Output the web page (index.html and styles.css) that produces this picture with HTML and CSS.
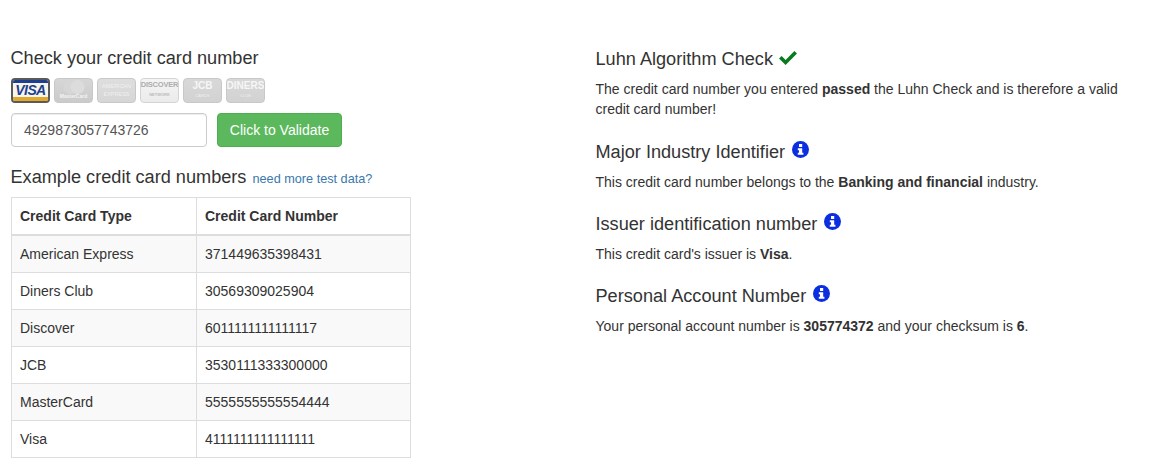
FILE: index.html
```html
<!DOCTYPE html>
<html>
<head>
  <link rel="stylesheet" href="styles.css">
</head>
<body>
  <div class="page">
    <!-- Left: form and examples -->
    <div class="left">
      <h4 class="title-check">Check your credit card number</h4>
      <div class="cards">
        <div class="card visa"><span class="visa-top"></span><span class="visa-text">VISA</span><span class="visa-bottom"></span></div>
        <div class="card off mc">
          <svg width="22" height="14" viewBox="0 0 22 14"><circle cx="7.500" cy="7" r="7" fill="#d6d6d6"/><circle cx="14.500" cy="7" r="7" fill="#dcdcdc"/></svg>
          <span class="mc-text">MasterCard</span>
        </div>
        <div class="card off amex"><span>AMERICAN</span><span>EXPRESS</span></div>
        <div class="card off discover"><span class="disc-name">DISCOVER</span><span class="disc-sub">NETWORK</span></div>
        <div class="card off jcb"><span class="big">JCB</span><span class="tiny">CARDS</span></div>
        <div class="card off diners"><span class="big">DINERS</span><span class="tiny">CLUB</span></div>
      </div>
      <div class="form-row">
        <input class="card-input" type="text" value="4929873057743726">
        <button class="btn-validate">Click to Validate</button>
      </div>
      <h4 class="title-examples">Example credit card numbers <a href="#" class="more">need more test data?</a></h4>
      <table class="examples">
        <thead>
          <tr><th class="col-type">Credit Card Type</th><th>Credit Card Number</th></tr>
        </thead>
        <tbody>
          <tr><td>American Express</td><td>371449635398431</td></tr>
          <tr><td>Diners Club</td><td>30569309025904</td></tr>
          <tr><td>Discover</td><td>6011111111111117</td></tr>
          <tr><td>JCB</td><td>3530111333300000</td></tr>
          <tr><td>MasterCard</td><td>5555555555554444</td></tr>
          <tr><td>Visa</td><td>4111111111111111</td></tr>
        </tbody>
      </table>
    </div>

    <!-- Right: results -->
    <div class="right">
      <h4 class="res-head res-first">Luhn Algorithm Check
        <svg class="check" width="20" height="16" viewBox="0 0 20 16"><path d="M1 8.500l2.600-2.600 4 4L16.400 1 19 3.600 7.600 15z" fill="#0a7a1e"/></svg>
      </h4>
      <p class="res-first-text">The credit card number you entered <b>passed</b> the Luhn Check and is therefore a valid credit card number!</p>
      <h4 class="res-head">Major Industry Identifier
        <svg class="info" width="17" height="17" viewBox="0 0 17 17"><circle cx="8.500" cy="8.500" r="8.500" fill="#0b2ee0"/><rect x="7" y="3" width="3.200" height="3" fill="#fff"/><path d="M5.800 7.200h4.400v4.600h1.200v2H5.800v-2H7V9.200H5.800z" fill="#fff"/></svg>
      </h4>
      <p>This credit card number belongs to the <b>Banking and financial</b> industry.</p>
      <h4 class="res-head">Issuer identification number
        <svg class="info" width="17" height="17" viewBox="0 0 17 17"><circle cx="8.500" cy="8.500" r="8.500" fill="#0b2ee0"/><rect x="7" y="3" width="3.200" height="3" fill="#fff"/><path d="M5.800 7.200h4.400v4.600h1.200v2H5.800v-2H7V9.200H5.800z" fill="#fff"/></svg>
      </h4>
      <p>This credit card's issuer is <b>Visa</b>.</p>
      <h4 class="res-head">Personal Account Number
        <svg class="info" width="17" height="17" viewBox="0 0 17 17"><circle cx="8.500" cy="8.500" r="8.500" fill="#0b2ee0"/><rect x="7" y="3" width="3.200" height="3" fill="#fff"/><path d="M5.800 7.200h4.400v4.600h1.200v2H5.800v-2H7V9.200H5.800z" fill="#fff"/></svg>
      </h4>
      <p>Your personal account number is <b>305774372</b> and your checksum is <b>6</b>.</p>
    </div>
  </div>
</body>
</html>
```

FILE: styles.css
```css
* {
  box-sizing: border-box;
}

body {
  margin: 0;
  background: #fff;
  color: #333;
  font-family: "Liberation Sans", Arial, sans-serif;
  font-size: 14px;
  line-height: 20px;
}

.page {
  display: flex;
  padding-left: 11px;
}

.left {
  width: 400px;
  flex: none;
  padding-top: 48px;
}

.right {
  width: 530px;
  margin-left: 184.500px;
  padding-top: 49px;
}

h4 {
  margin: 0;
  font-size: 18.150px;
  font-weight: 400;
  line-height: 20px;
}

.left h4 {
  margin-left: -0.5px;
}

/* Card logos */
.cards {
  display: flex;
  gap: 4px;
  margin-top: 10px;
}

.card {
  width: 39px;
  height: 25px;
  border-radius: 4px;
  display: flex;
  flex-direction: column;
  align-items: center;
  justify-content: center;
  overflow: hidden;
  font-weight: 700;
  line-height: 1;
}

.card.off {
  border: 1px solid #c8c8c8;
  background: linear-gradient(#d6d6d6, #cbcbcb);
  color: #f0f0f0;
}

.visa {
  border: 2px solid #5a5a5a;
  background: #f8f5ec;
  justify-content: space-between;
}

.visa-top {
  width: 100%;
  height: 3px;
  background: #1c3f8f;
}

.visa-bottom {
  width: 100%;
  height: 4px;
  background: #e0a92e;
}

.visa-text {
  color: #1c3f8f;
  font-size: 14px;
  font-style: italic;
  letter-spacing: -0.6px;
}

.card.mc {
  justify-content: flex-start;
  padding-top: 1px;
}

.mc-text {
  font-size: 5px;
  color: #f4f4f4;
}

.card.amex {
  font-size: 5.500px;
  font-weight: 400;
  gap: 2px;
  background: linear-gradient(#dedede, #d6d6d6);
}

.card.discover {
  border-color: #d4d4d4;
  background: linear-gradient(#f4f4f4, #ebebeb);
}

.disc-name {
  font-size: 7.500px;
  color: #adadad;
  letter-spacing: -0.2px;
  margin-top: -3px;
}

.disc-sub {
  font-size: 4px;
  margin-top: 4px;
  color: #bbb;
}

.card.jcb,
.card.diners {
  background: linear-gradient(#d8d8d8, #d2d2d2);
}

.big {
  font-size: 10px;
  font-weight: 700;
  color: #f6f6f6;
  margin-top: -3px;
}

.tiny {
  font-size: 4px;
  font-weight: 400;
  margin-top: 3px;
}

/* Form */
.form-row {
  display: flex;
  gap: 10px;
  margin-top: 10px;
}

.card-input {
  width: 196px;
  height: 34px;
  padding: 6px 12px;
  border: 1px solid #ccc;
  border-radius: 4px;
  color: #555;
  font-family: inherit;
  font-size: 14px;
  box-shadow: inset 0 1px 1px rgba(0, 0, 0, 0.075);
}

.btn-validate {
  width: 125px;
  height: 34px;
  border: 1px solid #4cae4c;
  border-radius: 4px;
  background: #5cb85c;
  color: #fff;
  font-family: inherit;
  font-size: 14px;
  cursor: pointer;
}

/* Examples table */
.title-examples {
  margin-top: 20px;
}

.more {
  color: #3a78ad;
  font-size: 12.700px;
  text-decoration: none;
  margin-left: 1px;
}

.examples {
  width: 400px;
  margin-top: 8px;
  border-collapse: collapse;
}

.examples th,
.examples td {
  height: 37px;
  padding: 8px;
  border: 1px solid #ddd;
  text-align: left;
}

.examples th {
  border-bottom-width: 2px;
}

.col-type {
  width: 185px;
}

.examples tbody tr:nth-child(odd) {
  background: #f9f9f9;
}

/* Results */
.res-head {
  display: flex;
  align-items: center;
  gap: 6.500px;
  margin-top: 22px;
}

.right .res-first {
  margin-top: 0;
}

.right p {
  margin: 10px 0 0;
}

.right .res-first-text {
  margin-bottom: 23px;
}

.res-first-text + .res-head {
  margin-top: 0;
}

.info {
  margin-top: -5px;
}

.check {
  margin-top: -2px;
  margin-left: -1.500px;
}
```
